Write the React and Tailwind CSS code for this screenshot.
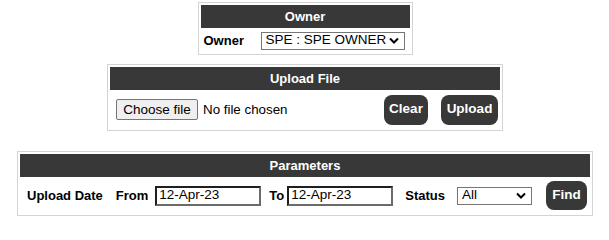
import React from "react";

const Header = ({ title }) => (
  <div className="h-[23px] bg-[#383838] flex items-center justify-center text-white font-bold text-[13px]">
    {title}
  </div>
);

const Chevron = () => (
  <svg width="10" height="7" viewBox="0 0 10 7" className="shrink-0">
    <path d="M1 1.5 L5 5.5 L9 1.5" fill="none" stroke="#000" strokeWidth="2" />
  </svg>
);

const FakeSelect = ({ value, className }) => (
  <div
    className={`h-[18px] border border-[#767676] bg-white flex items-center justify-between pl-[4px] pr-[5px] text-[13.5px] text-black ${className}`}
  >
    <span>{value}</span>
    <Chevron />
  </div>
);

const DarkButton = ({ label, className }) => (
  <button
    className={`bg-[#383838] text-white font-bold text-[13.5px] rounded-[8px] flex items-center justify-center ${className}`}
  >
    {label}
  </button>
);

const DateInput = ({ value }) => (
  <div className="w-[106px] h-[20px] border-2 border-t-[#1f1f1f] border-l-[#1f1f1f] border-r-[#6b6b6b] border-b-[#6b6b6b] bg-white flex items-center pl-[2px] text-[13.5px] text-black">
    {value}
  </div>
);

export default function App() {
  return (
    <div className="w-[609px] h-[229px] bg-white font-['Liberation_Sans',Arial,sans-serif] flex flex-col items-center pt-[2px]">
      {/* Owner */}
      <div className="w-[215px] border border-[#d4d4d4] p-[2px] ml-[1px]">
        <Header title="Owner" />
        <div className="h-[23px] flex items-center mt-[1px]">
          <span className="font-bold text-[13px] text-black ml-[3px] w-[57px]">Owner</span>
          <FakeSelect value="SPE : SPE OWNER" className="w-[144px]" />
        </div>
      </div>

      {/* Upload File */}
      <div className="w-[396px] border border-[#d4d4d4] p-[2px] mt-[9px] ml-[1px]">
        <Header title="Upload File" />
        <div className="h-[37px] flex items-center mt-[1px]">
          <button className="ml-[6px] h-[21px] w-[82px] bg-[#efefef] border border-[#767676] rounded-[2px] text-[13.5px] text-black leading-none">
            Choose file
          </button>
          <span className="ml-[5px] text-[13.33px] text-black">No file chosen</span>
          <DarkButton label="Clear" className="ml-auto w-[44px] h-[30px]" />
          <DarkButton label="Upload" className="ml-[13px] mr-[2px] w-[57px] h-[30px]" />
        </div>
      </div>

      {/* Parameters */}
      <div className="w-[576px] border border-[#d4d4d4] p-[2px] mt-[20px] ml-[1px]">
        <Header title="Parameters" />
        <div className="h-[35px] flex items-center mt-[1px] text-[13px] text-black">
          <span className="font-bold ml-[7px]">Upload Date</span>
          <span className="font-bold ml-[13px]">From</span>
          <div className="ml-[7px]">
            <DateInput value="12-Apr-23" />
          </div>
          <span className="font-bold ml-[8px]">To</span>
          <div className="ml-[3px]">
            <DateInput value="12-Apr-23" />
          </div>
          <span className="font-bold ml-[12px]">Status</span>
          <FakeSelect value="All" className="ml-[12px] w-[75px]" />
          <DarkButton label="Find" className="ml-[14px] w-[41px] h-[29px]" />
        </div>
      </div>
    </div>
  );
}
